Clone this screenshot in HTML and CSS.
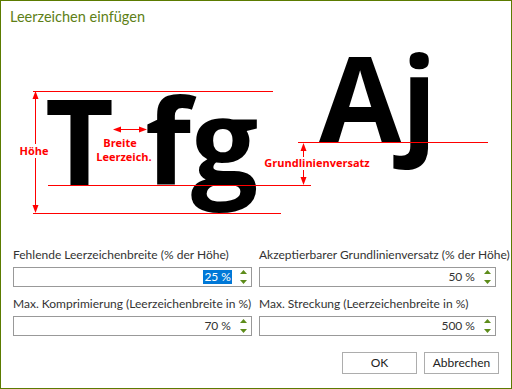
FILE: index.html
```html
<!DOCTYPE html>
<html lang="de">
<head>
<meta charset="utf-8">
<title>Leerzeichen einfügen</title>
<link rel="stylesheet" href="styles.css">
</head>
<body>
<div class="dialog">
  <div class="title">Leerzeichen einfügen</div>
  <svg class="diagram" width="510" height="200" viewBox="1 30 510 200" xmlns="http://www.w3.org/2000/svg">
    <g class="glyphs">
      <text x="45" y="185">T</text>
      <text x="145" y="185">fg</text>
      <text x="319" y="142">Aj</text>
    </g>
    <g class="lines">
      <line x1="33" y1="91.5" x2="273" y2="91.5"/>
      <line x1="48" y1="185.5" x2="311" y2="185.5"/>
      <line x1="33" y1="213.5" x2="281" y2="213.5"/>
      <line x1="298" y1="142.5" x2="488" y2="142.5"/>
      <line x1="35.5" y1="96" x2="35.5" y2="144"/>
      <line x1="35.5" y1="158" x2="35.5" y2="208"/>
      <line x1="118" y1="129.5" x2="142" y2="129.5"/>
      <line x1="303.5" y1="147" x2="303.5" y2="157"/>
      <line x1="303.5" y1="170" x2="303.5" y2="180"/>
    </g>
    <g class="heads">
      <polygon points="35.5,91 32.5,99 38.5,99"/>
      <polygon points="35.5,213 32.5,205 38.5,205"/>
      <polygon points="113,129.5 121,126.5 121,132.5"/>
      <polygon points="147,129.5 139,126.5 139,132.5"/>
      <polygon points="303.5,143 300.5,151 306.5,151"/>
      <polygon points="303.5,185 300.5,177 306.5,177"/>
    </g>
    <g class="labels">
      <text x="34" y="155" text-anchor="middle">Höhe</text>
      <text x="120" y="147" text-anchor="middle">Breite</text>
      <text x="124" y="161" text-anchor="middle">Leerzeich.</text>
      <text x="317" y="167" text-anchor="middle">Grundlinienversatz</text>
    </g>
  </svg>
  <div class="form">
    <div class="field">
      <div class="label">Fehlende Leerzeichenbreite (% der Höhe)</div>
      <div class="box"><span class="value selected">25 %</span><span class="spin"><svg width="7" height="14" viewBox="0 0 7 14"><polygon points="3.5,0 0,4 7,4"/><polygon points="3.5,14 0,10 7,10"/></svg></span></div>
    </div>
    <div class="field">
      <div class="label">Akzeptierbarer Grundlinienversatz (% der Höhe)</div>
      <div class="box"><span class="value">50 %</span><span class="spin"><svg width="7" height="14" viewBox="0 0 7 14"><polygon points="3.5,0 0,4 7,4"/><polygon points="3.5,14 0,10 7,10"/></svg></span></div>
    </div>
    <div class="field">
      <div class="label">Max. Komprimierung (Leerzeichenbreite in %)</div>
      <div class="box"><span class="value">70 %</span><span class="spin"><svg width="7" height="14" viewBox="0 0 7 14"><polygon points="3.5,0 0,4 7,4"/><polygon points="3.5,14 0,10 7,10"/></svg></span></div>
    </div>
    <div class="field">
      <div class="label">Max. Streckung (Leerzeichenbreite in %)</div>
      <div class="box"><span class="value">500 %</span><span class="spin"><svg width="7" height="14" viewBox="0 0 7 14"><polygon points="3.5,0 0,4 7,4"/><polygon points="3.5,14 0,10 7,10"/></svg></span></div>
    </div>
  </div>
  <div class="buttons">
    <div class="btn">OK</div>
    <div class="btn">Abbrechen</div>
  </div>
</div>
</body>
</html>
```

FILE: styles.css
```css
html, body {
  margin: 0;
  padding: 0;
  background: #ffffff;
}
.dialog {
  width: 512px;
  height: 389px;
  box-sizing: border-box;
  border: 1px solid #5b7b00;
  background: #ffffff;
  display: flex;
  flex-direction: column;
  font-family: "Lato", "Open Sans", sans-serif;
  color: #333333;
}
.title {
  height: 29px;
  box-sizing: border-box;
  padding: 6px 0 0 9px;
  font-size: 14.5px;
  line-height: 20px;
  color: #5e7f17;
}
.diagram {
  display: block;
  flex: none;
}
.glyphs text {
  font-family: "Open Sans", "Noto Sans", sans-serif;
  font-weight: 700;
  font-size: 119px;
  fill: #000000;
}
.lines line {
  stroke: #ff0000;
  stroke-width: 1;
}
.heads polygon {
  fill: #ff0000;
}
.labels text {
  font-family: "Open Sans", "Noto Sans", sans-serif;
  font-weight: 700;
  font-size: 11px;
  fill: #ff0000;
}
.form {
  display: grid;
  grid-template-columns: 239px 237px;
  column-gap: 7px;
  row-gap: 9px;
  padding: 17px 0 0 12px;
}
.label {
  font-size: 12px;
  line-height: 16px;
  margin-bottom: 4px;
  white-space: nowrap;
}
.box {
  height: 20px;
  box-sizing: border-box;
  border: 1px solid #999999;
  display: flex;
  align-items: center;
  justify-content: flex-end;
  padding-right: 4px;
  font-size: 12px;
}
.value {
  line-height: 14px;
  padding: 0 1px;
  margin-right: 8px;
}
.value.selected {
  background: #0078d7;
  color: #ffffff;
}
.spin {
  display: flex;
  width: 7px;
}
.spin svg {
  display: block;
}
.spin polygon {
  fill: #5d8c1a;
}
.buttons {
  display: flex;
  justify-content: flex-end;
  gap: 7px;
  padding: 16px 12px 0 0;
}
.btn {
  width: 75px;
  height: 22px;
  box-sizing: border-box;
  border: 1px solid #adadad;
  font-size: 12px;
  line-height: 20px;
  text-align: center;
  color: #222222;
}
```
